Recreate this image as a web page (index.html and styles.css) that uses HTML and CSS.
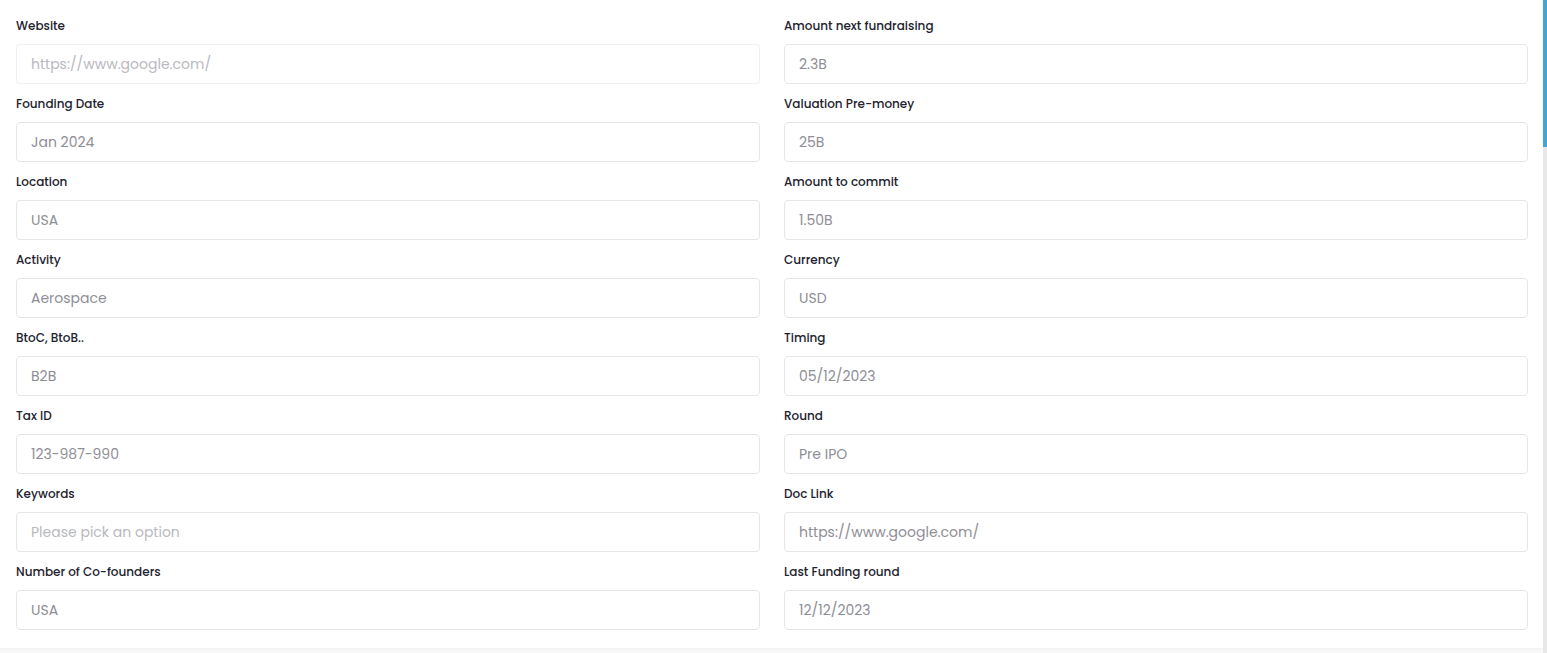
FILE: index.html
```html
<!DOCTYPE html>
<html lang="en">
<head>
<meta charset="utf-8">
<title>Company details</title>
<link rel="stylesheet" href="styles.css">
</head>
<body>
<div class="screen">
  <main class="card">
    <form class="grid">
      <div class="field"><label class="label">Website</label><div class="input input--muted placeholder">https://www.google.com/</div></div>
      <div class="field"><label class="label">Amount next fundraising</label><div class="input">2.3B</div></div>
      <div class="field"><label class="label">Founding Date</label><div class="input">Jan 2024</div></div>
      <div class="field"><label class="label">Valuation Pre-money</label><div class="input">25B</div></div>
      <div class="field"><label class="label">Location</label><div class="input">USA</div></div>
      <div class="field"><label class="label">Amount to commit</label><div class="input">1.50B</div></div>
      <div class="field"><label class="label">Activity</label><div class="input">Aerospace</div></div>
      <div class="field"><label class="label">Currency</label><div class="input">USD</div></div>
      <div class="field"><label class="label">BtoC, BtoB..</label><div class="input">B2B</div></div>
      <div class="field"><label class="label">Timing</label><div class="input">05/12/2023</div></div>
      <div class="field"><label class="label">Tax ID</label><div class="input">123-987-990</div></div>
      <div class="field"><label class="label">Round</label><div class="input">Pre IPO</div></div>
      <div class="field"><label class="label">Keywords</label><div class="input placeholder">Please pick an option</div></div>
      <div class="field"><label class="label">Doc Link</label><div class="input">https://www.google.com/</div></div>
      <div class="field"><label class="label">Number of Co-founders</label><div class="input">USA</div></div>
      <div class="field"><label class="label">Last Funding round</label><div class="input">12/12/2023</div></div>
    </form>
  </main>
  <div class="scrollbar"><div class="thumb"></div></div>
</div>
</body>
</html>
```

FILE: styles.css
```css
html, body {
  margin: 0;
  padding: 0;
  background: #f8f8f9;
  font-family: "Poppins", "Open Sans", "Inter", "Liberation Sans", sans-serif;
}

.screen {
  display: flex;
  width: 1547px;
  height: 653px;
  align-items: flex-start;
}

.card {
  flex: 1;
  background: #ffffff;
  height: 648px;
  box-sizing: border-box;
  padding: 16px 15px 18px 16px;
  box-shadow: 0 1px 3px rgba(0, 0, 0, 0.04);
}

.grid {
  display: grid;
  grid-template-columns: 1fr 1fr;
  column-gap: 24px;
  row-gap: 10px;
  margin: 0;
}

.field {
  display: flex;
  flex-direction: column;
  gap: 9px;
}

.label {
  font-size: 12px;
  line-height: 18px;
  font-weight: 500;
  color: #22222e;
  height: 18px;
  margin-top: 1px;
}

.input {
  height: 40px;
  box-sizing: border-box;
  border: 1px solid #e6e6e8;
  border-radius: 4px;
  padding: 0 14px;
  display: flex;
  align-items: center;
  font-size: 14px;
  color: #8e8e96;
  white-space: nowrap;
}

.input--muted {
  border-color: #f0f0f2;
}

.placeholder {
  color: #b9b9c0;
}

.scrollbar {
  width: 4px;
  height: 653px;
  background: #e8e8e8;
  display: flex;
  flex-direction: column;
}

.thumb {
  height: 147px;
  background: #3fa6d6;
}
```
